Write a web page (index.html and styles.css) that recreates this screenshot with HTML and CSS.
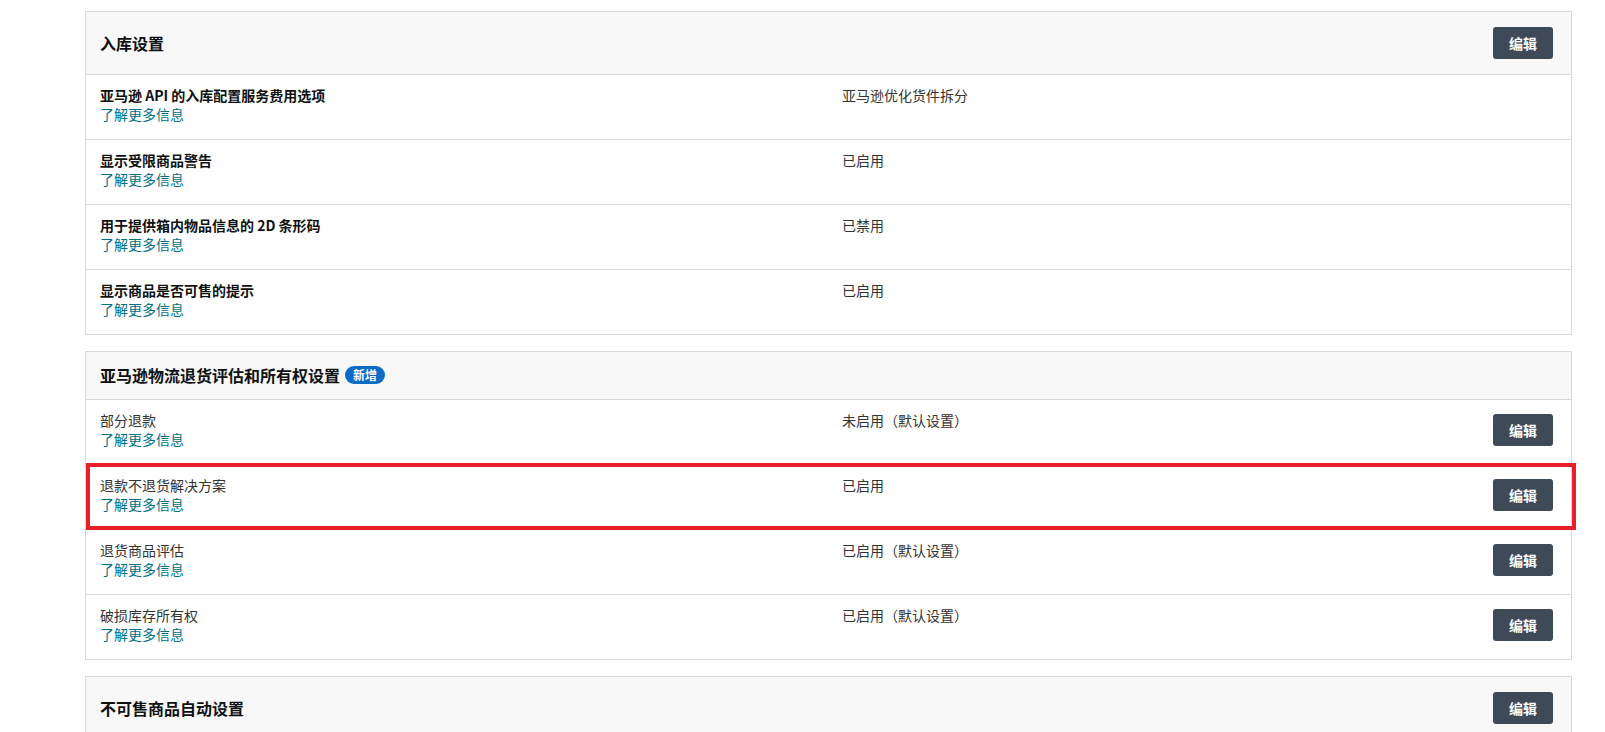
FILE: index.html
```html
<!DOCTYPE html>
<html lang="zh-CN">
  <head>
    <meta charset="UTF-8" />
    <title>亚马逊物流设置</title>
    <link rel="stylesheet" href="styles.css">
  </head>
  <body>
    <div class="page">
      <div class="card">
        <div class="card-head">
          <h2>入库设置</h2>
          <button class="btn">编辑</button>
        </div>
        <div class="row">
          <div class="label"><b>亚马逊 API 的入库配置服务费用选项</b><a href="#">了解更多信息</a></div>
          <div class="value">亚马逊优化货件拆分</div>
        </div>
        <div class="row">
          <div class="label"><b>显示受限商品警告</b><a href="#">了解更多信息</a></div>
          <div class="value">已启用</div>
        </div>
        <div class="row">
          <div class="label"><b>用于提供箱内物品信息的 2D 条形码</b><a href="#">了解更多信息</a></div>
          <div class="value">已禁用</div>
        </div>
        <div class="row">
          <div class="label"><b>显示商品是否可售的提示</b><a href="#">了解更多信息</a></div>
          <div class="value">已启用</div>
        </div>
      </div>

      <div class="card">
        <div class="card-head small">
          <h2>亚马逊物流退货评估和所有权设置 <span class="badge">新增</span></h2>
        </div>
        <div class="row">
          <div class="label"><span>部分退款</span><a href="#">了解更多信息</a></div>
          <div class="value">未启用（默认设置）</div>
          <button class="btn">编辑</button>
        </div>
        <div class="row marked">
          <div class="label"><span>退款不退货解决方案</span><a href="#">了解更多信息</a></div>
          <div class="value">已启用</div>
          <button class="btn">编辑</button>
        </div>
        <div class="row">
          <div class="label"><span>退货商品评估</span><a href="#">了解更多信息</a></div>
          <div class="value">已启用（默认设置）</div>
          <button class="btn">编辑</button>
        </div>
        <div class="row">
          <div class="label"><span>破损库存所有权</span><a href="#">了解更多信息</a></div>
          <div class="value">已启用（默认设置）</div>
          <button class="btn">编辑</button>
        </div>
      </div>

      <div class="card">
        <div class="card-head">
          <h2>不可售商品自动设置</h2>
          <button class="btn">编辑</button>
        </div>
      </div>
    </div>
  </body>
</html>
```
FILE: styles.css
```css
* {
  margin: 0;
  padding: 0;
  box-sizing: border-box;
}

body {
  font-family: "Noto Sans CJK SC", "Noto Sans", sans-serif;
  color: #0f1111;
  background-color: #ffffff;
  overflow: hidden;
}

.page {
  width: 1487px;
  margin-left: 85px;
  padding-top: 11px;
}

.card {
  border: 1px solid #d5d9d9;
  margin-bottom: 16px;
}

.card-head {
  display: flex;
  justify-content: space-between;
  align-items: center;
  height: 63px;
  padding: 0 18px 0 14px;
  background-color: #f8f8f8;
  border-bottom: 1px solid #d5d9d9;
}

.card-head.small {
  height: 48px;
}

.card-head h2 {
  font-size: 16px;
  font-weight: 700;
  display: flex;
  align-items: center;
  gap: 5px;
  margin-top: -1px;
}

.badge {
  display: inline-block;
  background-color: #0b6bc5;
  color: #ffffff;
  font-size: 12px;
  font-weight: 700;
  line-height: 18px;
  height: 18px;
  width: 40px;
  text-align: center;
  border-radius: 9px;
}

.btn {
  width: 60px;
  height: 32px;
  background-color: #3e4a58;
  color: #ffffff;
  border: none;
  border-radius: 3px;
  font-family: inherit;
  font-size: 14px;
  font-weight: 700;
  cursor: pointer;
}

.row {
  display: grid;
  grid-template-columns: 742px 1fr auto;
  align-items: start;
  height: 65px;
  padding: 11px 18px 0 14px;
  border-bottom: 1px solid #d5d9d9;
  font-size: 14px;
  line-height: 19px;
}

.row:last-child {
  border-bottom: none;
  height: 64px;
}

.row .btn {
  margin-top: 3px;
}

.label b,
.label span {
  display: block;
  color: #0f1111;
}

.label span {
  color: #333333;
}

.label a {
  display: block;
  color: #007185;
  text-decoration: none;
}

.value {
  color: #333333;
}

.marked {
  position: relative;
}

.marked::after {
  content: "";
  position: absolute;
  left: 0;
  right: -5px;
  top: -2px;
  bottom: -1px;
  border: 4px solid #e8202a;
}
```
